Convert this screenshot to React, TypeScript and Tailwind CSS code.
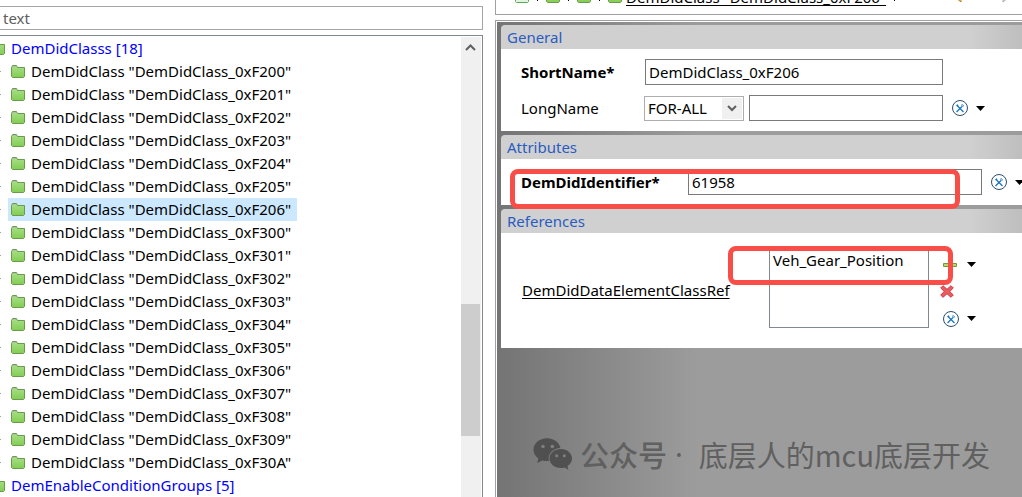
import { useState } from 'react';
import type { ReactNode } from 'react';

const ids = [
  '0xF200', '0xF201', '0xF202', '0xF203', '0xF204', '0xF205', '0xF206',
  '0xF300', '0xF301', '0xF302', '0xF303', '0xF304', '0xF305', '0xF306',
  '0xF307', '0xF308', '0xF309', '0xF30A',
];

const Folder = ({ pale = false }: { pale?: boolean }) => (
  <svg width="14" height="13" viewBox="0 0 14 13" className="shrink-0">
    <defs>
      <linearGradient id="folder" x1="0" y1="0" x2="0" y2="1">
        <stop offset="0" stopColor="#a9e08a" />
        <stop offset="1" stopColor="#82cd52" />
      </linearGradient>
    </defs>
    <path
      d="M.5 2.5 1.5 .5H5.5L6.5 2.5H13.5V11.5L12.5 12.5H1.5L.5 11.5Z"
      fill={pale ? '#e0f5e0' : 'url(#folder)'}
      stroke={pale ? '#58a858' : '#6a9a4c'}
    />
    <path d="M2 1.5H5" stroke="#b4bcae" />
  </svg>
);

const Caret = () => (
  <svg width="9" height="5" viewBox="0 0 9 5" className="shrink-0">
    <path d="M0 0H9L4.5 5Z" fill="#000" />
  </svg>
);

const Tools = () => (
  <svg width="16" height="16" viewBox="0 0 16 16" className="shrink-0" fill="none">
    <circle cx="8" cy="8" r="7.500" fill="#fff" stroke="#2b4f6e" />
    <path d="M5.500 6 11.500 12" stroke="#1673c0" strokeWidth="1.300" />
    <path d="M10 6.500 4.500 12" stroke="#1673c0" strokeWidth="1.300" />
    <path d="M4 5.600 5.500 4.200 6.600 5.300 5.200 6.700Z" fill="#1673c0" />
    <path d="M10.300 4 9.800 5.700 10.500 6.300 12 5.700" stroke="#1673c0" strokeWidth=".9" />
  </svg>
);

const ToolMenu = ({ label }: { label: string }) => (
  <button aria-label={label} className="flex shrink-0 items-center gap-2">
    <Tools />
    <Caret />
  </button>
);

// two overlapping chat bubbles, the small one cut out of the big one
const ChatLogo = () => (
  <svg width="39" height="33" viewBox="0 0 39 33" className="shrink-0">
    <mask id="big">
      <rect width="39" height="33" fill="#fff" />
      <ellipse cx="27.800" cy="20.500" rx="12.200" ry="10.600" fill="#000" />
      <circle cx="10" cy="8.500" r="1.800" fill="#000" />
      <circle cx="19.300" cy="8.500" r="1.800" fill="#000" />
    </mask>
    <mask id="small">
      <rect width="39" height="33" fill="#fff" />
      <circle cx="23.700" cy="17.700" r="1.500" fill="#000" />
      <circle cx="31.300" cy="17.700" r="1.500" fill="#000" />
    </mask>
    <g fill="#505050">
      <path
        mask="url(#big)"
        d="M14 .3C6.400 .3 .500 5.300 .500 11.700 .500 15.300 2.500 18.400 5.400 20.500L4.200 25 9.200 22.400C10.800 22.900 12.400 23.100 14 23.100 21.600 23.100 27.500 18 27.500 11.700S21.600 .3 14 .3Z"
      />
      <path
        mask="url(#small)"
        d="M27.800 11C21.500 11 16.500 15.200 16.500 20.500S21.500 30 27.800 30C29.200 30 30.500 29.800 31.700 29.400L35.300 31.800 34.500 28C37.300 26.300 39 23.600 39 20.500 39 15.200 34.100 11 27.800 11Z"
      />
    </g>
  </svg>
);

const Section = ({ title, children }: { title: string; children: ReactNode }) => (
  <section className="relative">
    <h2 className="h-6 rounded-tl bg-linear-to-r from-[#d0d0d0] from-90% to-[#bebebe] pl-1.5 leading-6 text-[#2a5cc2]">
      {title}
    </h2>
    <div className="bg-white">{children}</div>
  </section>
);

const Tree = () => {
  const [selected, setSelected] = useState('0xF206');

  return (
    <div className="flex min-h-0 flex-1 border-t border-r border-[#828790] pt-px">
      <ul className="min-w-0 flex-1 overflow-hidden whitespace-nowrap">
        <li className="-ml-[9px] flex h-[23px] items-center gap-1.5 text-[#0000ff]">
          <Folder />
          <span>DemDidClasss [18]</span>
        </li>
        {ids.map((id) => (
          <li key={id} className="flex h-[23px] items-center">
            <span className="mr-[7px] h-px w-px bg-gray-400"></span>
            <button
              onClick={() => setSelected(id)}
              className={
                id === selected
                  ? 'flex h-[23px] items-center gap-1.5 bg-[#cce8ff] pr-1.5 pl-[3px]'
                  : 'flex h-[23px] items-center gap-1.5 pr-1.5 pl-[3px]'
              }
            >
              <Folder />
              <span>DemDidClass "DemDidClass_{id}"</span>
            </button>
          </li>
        ))}
        <li className="-ml-[9px] flex h-[23px] items-center gap-1.5 text-[#0000ff]">
          <Folder />
          <span>DemEnableConditionGroups [5]</span>
        </li>
      </ul>
      <div className="mr-px flex w-5 flex-col bg-[#f0f0f0]">
        <svg width="20" height="23" viewBox="0 0 20 23" fill="none">
          <path d="M5 13 9.500 8.500 14 13" stroke="#606060" strokeWidth="2" />
        </svg>
        <div className="flex-[244]"></div>
        <div className="mr-px flex-[132] bg-[#cdcdcd]"></div>
        <div className="flex-[61]"></div>
      </div>
    </div>
  );
};

const Dot = () => <span className="mb-0.5 h-0.5 w-px bg-black"></span>;

const Breadcrumb = () => (
  <nav className="flex h-[15px] items-end overflow-hidden border-b border-l border-[#a0a0a4] pb-[11px] pl-[19px] whitespace-nowrap">
    <div className="flex items-end gap-2">
      <Folder pale />
      <Dot />
      <Folder />
      <Dot />
      <Folder />
      <Dot />
      <Folder />
    </div>
    <a href="#class" className="-mb-1 ml-1 leading-5 underline underline-offset-2">
      DemDidClass "DemDidClass_0xF206"
    </a>
    <span className="mb-0.5 ml-2 h-0.5 w-px bg-black"></span>
    <div className="mr-3 ml-auto flex gap-10">
      <svg width="8" height="12" viewBox="0 0 8 12">
        <path d="M7 1V11L1 6Z" fill="#ffe08a" stroke="#b07d1c" />
      </svg>
      <svg width="8" height="12" viewBox="0 0 8 12">
        <path d="M1 1V11L7 6Z" fill="#eee" stroke="#a8a8a8" />
      </svg>
    </div>
  </nav>
);

const App = () => (
  <div className="grid h-screen grid-cols-[minmax(0,483fr)_minmax(0,527fr)] gap-x-3 overflow-hidden bg-white font-['Noto_Sans','Noto_Sans_CJK_SC',sans-serif] text-[15px] text-black">
    <aside className="flex min-h-0 flex-col gap-[5px] pt-1.5">
      <input
        aria-label="Filter"
        placeholder="text"
        className="h-6 w-full shrink-0 border border-l-0 border-[#a6a6aa] px-[3px] outline-none placeholder:text-[#606060]"
      />
      <Tree />
    </aside>

    <main className="flex min-h-0 flex-col gap-[5px]">
      <Breadcrumb />
      <div className="flex flex-1 flex-col border-t border-l border-[#a0a0a4] pt-px pl-px">
        <div className="flex flex-1 flex-col gap-1 bg-linear-to-r from-[#747474] to-[#9c9c9c] to-38% pt-[3px] pl-1">
          <Section title="General">
            <div className="flex flex-col gap-2.5 pt-2.5 pb-2.5 pl-5">
              <div className="flex items-center pr-[79px]">
                <label htmlFor="short" className="w-[124px] shrink-0 font-bold">ShortName*</label>
                <input
                  id="short"
                  defaultValue="DemDidClass_0xF206"
                  className="h-[26px] min-w-0 flex-1 border border-[#7a7a7a] px-[3px] outline-none"
                />
              </div>
              <div className="flex items-center pr-[37px]">
                <label htmlFor="long" className="w-[123px] shrink-0">LongName</label>
                <div className="relative mr-[5px] w-[100px] shrink-0">
                  <select
                    aria-label="Language"
                    className="block h-[25px] w-full appearance-none border border-[#adadad] pl-[3px] outline-none"
                  >
                    <option>FOR-ALL</option>
                  </select>
                  <span className="pointer-events-none absolute top-0.5 right-0.5 flex h-[21px] w-5 items-center justify-center bg-[#f0f0f0]">
                    <svg width="10" height="7" viewBox="0 0 10 7" fill="none">
                      <path d="M1 1 5 5 9 1" stroke="#606060" strokeWidth="2" />
                    </svg>
                  </span>
                </div>
                <input
                  id="long"
                  className="mr-[9px] h-[26px] min-w-0 flex-1 border border-[#7a7a7a] px-[3px] outline-none"
                />
                <ToolMenu label="LongName tools" />
              </div>
            </div>
          </Section>

          <Section title="Attributes">
            <div className="flex items-center overflow-hidden py-2.5 pl-5">
              <label htmlFor="did" className="w-[167px] shrink-0 font-bold">DemDidIdentifier*</label>
              <input
                id="did"
                defaultValue="61958"
                className="mr-[9px] h-[26px] min-w-0 flex-1 border border-[#7a7a7a] px-[3px] outline-none"
              />
              <div className="-mr-0.5">
                <ToolMenu label="DemDidIdentifier tools" />
              </div>
            </div>
            <div className="pointer-events-none absolute top-[34px] right-[62px] left-[9px] h-10 rounded-lg border-[5px] border-[#f94d48]"></div>
          </Section>

          <Section title="References">
            <div className="flex items-center py-4 pr-[46px] pl-[21px]">
              <a href="#ref" id="refs" className="mr-auto underline underline-offset-2">
                DemDidDataElementClassRef
              </a>
              <select
                size={3}
                aria-labelledby="refs"
                className="mr-[11px] mb-1 h-[79px] w-40 overflow-hidden border border-[#828790] outline-none"
              >
                <option className="px-[3px] leading-[23px]">Veh_Gear_Position</option>
              </select>
              <div className="flex flex-col self-end">
                <button aria-label="Add reference" className="flex h-[27px] items-center gap-2.5 pl-[3px]">
                  <svg width="14" height="14" viewBox="0 0 14 14">
                    <path d="M5.500 1H8.500V5.500H13.500V8.500H8.500V13H5.500V8.500H.5V5.500H5.500Z" fill="#b5d96a" stroke="#729646" />
                  </svg>
                  <Caret />
                </button>
                <button aria-label="Remove reference" className="h-[27px] w-4">
                  <svg width="14" height="13" viewBox="0 0 14 13">
                    <path
                      d="M3 .7 7 4.300 11 .7 13.300 3 9.700 6.500 13.300 10 11 12.300 7 8.700 3 12.300 .7 10 4.300 6.500 .7 3Z"
                      fill="#e85c60"
                      stroke="#c93840"
                    />
                  </svg>
                </button>
                <div className="flex h-[27px] pl-[3px]">
                  <ToolMenu label="Reference tools" />
                </div>
              </div>
            </div>
            <div className="pointer-events-none absolute top-[37px] right-[69px] left-[227px] h-[39px] rounded-lg border-[5px] border-[#f94d48]"></div>
          </Section>

          <footer className="mt-auto flex items-center justify-end pr-8 pb-[23px] text-[29px] leading-10 whitespace-nowrap text-[#606060] font-['Noto_Sans_CJK_SC',sans-serif]">
            <ChatLogo />
            <span className="ml-2 font-medium">公众号</span>
            <span className="mr-4 ml-2 font-['Noto_Sans',sans-serif]">·</span>
            <span>底层人的mcu底层开发</span>
          </footer>
        </div>
      </div>
    </main>
  </div>
);

export default App;
